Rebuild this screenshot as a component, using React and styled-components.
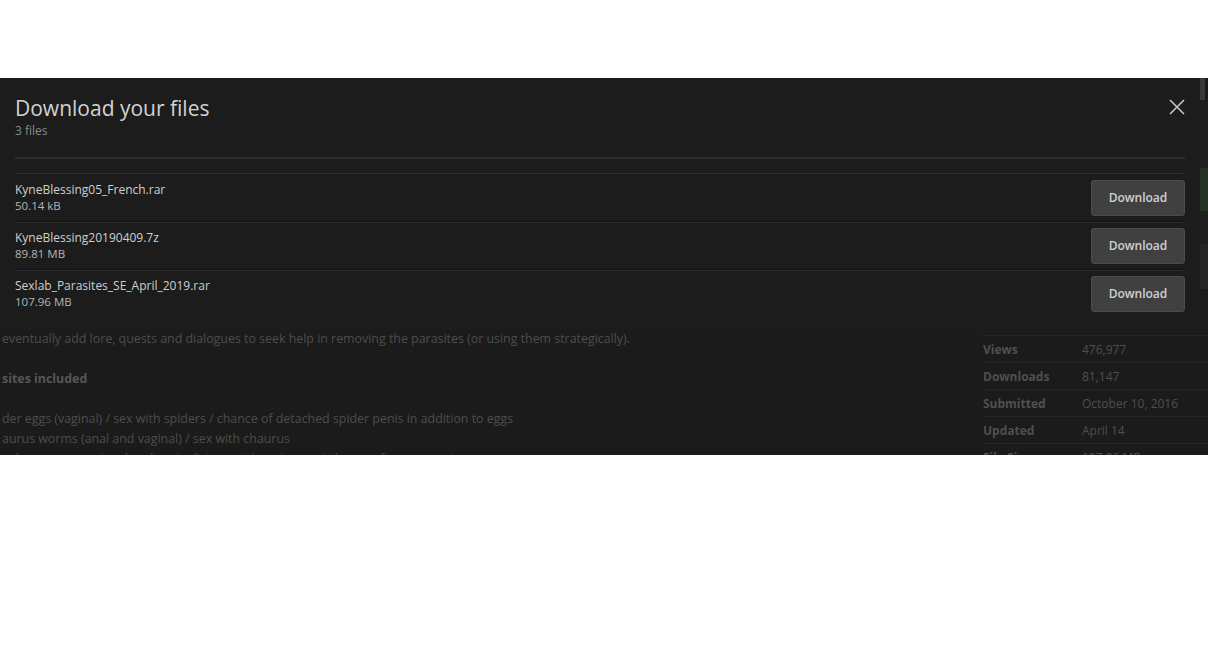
import React from "react";
import styled, { createGlobalStyle } from "styled-components";

const Global = createGlobalStyle`
  html, body {
    margin: 0;
    padding: 0;
    background: #fff;
    font-family: "Open Sans", "Liberation Sans", sans-serif;
  }
`;

const files = [
  { name: "KyneBlessing05_French.rar", size: "50.14 kB" },
  { name: "KyneBlessing20190409.7z", size: "89.81 MB" },
  { name: "Sexlab_Parasites_SE_April_2019.rar", size: "107.96 MB" },
];

const stats = [
  ["Views", "476,977"],
  ["Downloads", "81,147"],
  ["Submitted", "October 10, 2016"],
  ["Updated", "April 14"],
  ["File Size", "107.96 MB"],
];

export default function App() {
  return (
    <>
      <Global />
      <Band>
        <Page>
          <MainCol>
            <TopArea />
            <Para gap>eventually add lore, quests and dialogues to seek help in removing the parasites (or using them strategically).</Para>
            <Para gap bold>sites included</Para>
            <Para>der eggs (vaginal) / sex with spiders / chance of detached spider penis in addition to eggs</Para>
            <Para>aurus worms (anal and vaginal) / sex with chaurus</Para>
            <Para>ushroom spores (anal and vaginal) / sex with spriggans / chance of roots growing</Para>
          </MainCol>
          <SideCol>
            <SideTop>
              <Thumb />
              <SideBlock h={68} c="#1f1f1f" />
              <SideBlock h={44} c="#243024" />
              <SideBlock h={33} c="#1f1f1f" />
              <SideBlock h={45} c="#262626" />
              <SideBlock h={46} c="#1c1c1c" />
            </SideTop>
            <Stats>
              {stats.map(([k, v]) => (
                <StatRow key={k}>
                  <StatKey>{k}</StatKey>
                  <StatVal>{v}</StatVal>
                </StatRow>
              ))}
            </Stats>
          </SideCol>
        </Page>

        <Modal>
          <Header>
            <div>
              <Title>Download your files</Title>
              <Count>3 files</Count>
            </div>
            <Close aria-label="close">
              <svg width="16" height="16" viewBox="0 0 16 16">
                <path d="M1 1L15 15M15 1L1 15" stroke="#c4c4c4" strokeWidth="1.6" fill="none" />
              </svg>
            </Close>
          </Header>
          <Rule />
          <List>
            {files.map((f) => (
              <FileRow key={f.name}>
                <div>
                  <FileName>{f.name}</FileName>
                  <FileSize>{f.size}</FileSize>
                </div>
                <DlButton>Download</DlButton>
              </FileRow>
            ))}
          </List>
        </Modal>
      </Band>
    </>
  );
}

const Band = styled.div`
  position: relative;
  margin-top: 78px;
  height: 377px;
  overflow: hidden;
  background: #1b1b1b;
`;

const Page = styled.div`
  display: flex;
  height: 100%;
`;

const MainCol = styled.div`
  flex: 1;
  display: flex;
  flex-direction: column;
  padding-left: 2px;
  overflow: hidden;
`;

const TopArea = styled.div`
  height: 251px;
  flex-shrink: 0;
`;

const Para = styled.p`
  margin: 0 0 ${(p) => (p.gap ? "20px" : "0")};
  height: 20px;
  flex-shrink: 0;
  line-height: 20px;
  font-size: 12.4px;
  white-space: nowrap;
  color: ${(p) => (p.bold ? "#575757" : "#4d4d4d")};
  font-weight: ${(p) => (p.bold ? 700 : 400)};
`;

const SideCol = styled.div`
  width: 226px;
  display: flex;
  flex-direction: column;
`;

const SideTop = styled.div`
  height: 257px;
  display: flex;
  flex-direction: column;
  align-items: flex-end;
  flex-shrink: 0;
`;

const Thumb = styled.div`
  width: 5px;
  height: 22px;
  margin-right: 3px;
  background: #3a3a3a;
`;

const SideBlock = styled.div`
  width: 100%;
  height: ${(p) => p.h}px;
  background: ${(p) => p.c};
`;

const Stats = styled.div`
  border-top: 1px solid #252525;
`;

const StatRow = styled.div`
  display: flex;
  align-items: center;
  height: 26px;
  border-bottom: 1px solid #252525;
  font-size: 12px;
  padding-left: 1px;
`;

const StatKey = styled.span`
  width: 99px;
  font-weight: 700;
  color: #4f4f4f;
`;

const StatVal = styled.span`
  color: #4f4f4f;
`;

const Modal = styled.div`
  position: absolute;
  top: 0;
  left: 0;
  width: 1200px;
  height: 253px;
  background: #1c1c1c;
  padding: 0 15px;
  box-sizing: border-box;
`;

const Header = styled.div`
  display: flex;
  justify-content: space-between;
  align-items: flex-start;
  padding-top: 15px;
  height: 79px;
  box-sizing: border-box;
`;

const Title = styled.h2`
  margin: 0;
  font-size: 21px;
  font-weight: 400;
  line-height: 30px;
  color: #d2d2d2;
`;

const Count = styled.div`
  font-size: 12px;
  line-height: 16px;
  color: #8a8a8a;
`;

const Close = styled.button`
  background: none;
  border: 0;
  padding: 0;
  margin-top: 6px;
  cursor: pointer;
  display: flex;
`;

const Rule = styled.div`
  height: 2px;
  background: #2c2c2c;
  margin-bottom: 14px;
`;

const List = styled.div`
  border-top: 1px solid #303030;
`;

const FileRow = styled.div`
  display: flex;
  justify-content: space-between;
  align-items: center;
  height: 47px;
  border-bottom: 1px solid #121212;
  box-shadow: 0 1px 0 #303030;
  &:last-child {
    border-bottom: 0;
    box-shadow: none;
  }
`;

const FileName = styled.div`
  font-size: 12px;
  line-height: 17px;
  color: #cfcfcf;
`;

const FileSize = styled.div`
  font-size: 11.5px;
  line-height: 16px;
  color: #b4b4b4;
`;

const DlButton = styled.button`
  width: 94px;
  height: 36px;
  border: 1px solid #4b4b4b;
  border-radius: 3px;
  background: #404040;
  color: #d0d0d0;
  font-family: "Open Sans", "Liberation Sans", sans-serif;
  font-size: 12px;
  font-weight: 600;
  cursor: pointer;
`;
